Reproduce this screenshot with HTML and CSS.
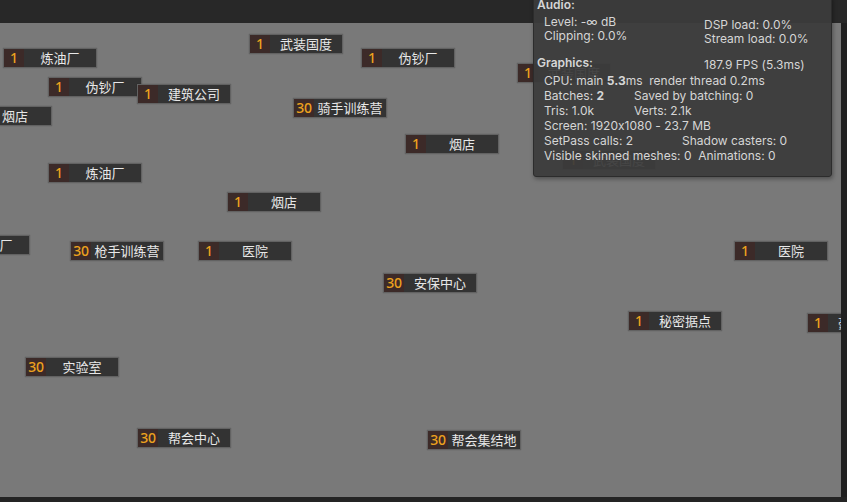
FILE: index.html
```html
<!DOCTYPE html>
<html lang="zh">
<head>
<meta charset="utf-8">
<link rel="stylesheet" href="styles.css">
</head>
<body>
<div class="stage">
  <div class="topbar"></div>
  <div class="middle">
    <div class="canvas">
      <div class="tag" style="left:3px;top:25px"><span class="num">1</span><span class="name">炼油厂</span></div>
      <div class="tag" style="left:249px;top:11px"><span class="num">1</span><span class="name">武装国度</span></div>
      <div class="tag" style="left:361px;top:25px"><span class="num">1</span><span class="name">伪钞厂</span></div>
      <div class="tag" style="left:517px;top:40px"><span class="num">1</span><span class="name">武装国度</span></div>
      <div class="tag" style="left:562px;top:127px"><span class="num">1</span><span class="name">武装国度</span></div>
      <div class="tag" style="left:48px;top:54px"><span class="num">1</span><span class="name">伪钞厂</span></div>
      <div class="tag" style="left:137px;top:61px"><span class="num">1</span><span class="name">建筑公司</span></div>
      <div class="tag" style="left:-42px;top:83px"><span class="num">1</span><span class="name">烟店</span></div>
      <div class="tag" style="left:293px;top:75px"><span class="num">30</span><span class="name">骑手训练营</span></div>
      <div class="tag" style="left:405px;top:111px"><span class="num">1</span><span class="name">烟店</span></div>
      <div class="tag" style="left:48px;top:140px"><span class="num">1</span><span class="name">炼油厂</span></div>
      <div class="tag" style="left:227px;top:169px"><span class="num">1</span><span class="name">烟店</span></div>
      <div class="tag" style="left:-64px;top:212px"><span class="num">1</span><span class="name">炼油厂</span></div>
      <div class="tag" style="left:70px;top:218px"><span class="num">30</span><span class="name">枪手训练营</span></div>
      <div class="tag" style="left:198px;top:218px"><span class="num">1</span><span class="name">医院</span></div>
      <div class="tag" style="left:734px;top:218px"><span class="num">1</span><span class="name">医院</span></div>
      <div class="tag" style="left:383px;top:250px"><span class="num">30</span><span class="name">安保中心</span></div>
      <div class="tag" style="left:628px;top:288px"><span class="num">1</span><span class="name">秘密据点</span></div>
      <div class="tag" style="left:807px;top:290px"><span class="num">1</span><span class="name">豪华别墅</span></div>
      <div class="tag" style="left:25px;top:334px"><span class="num">30</span><span class="name">实验室</span></div>
      <div class="tag" style="left:137px;top:405px"><span class="num">30</span><span class="name">帮会中心</span></div>
      <div class="tag" style="left:427px;top:407px"><span class="num">30</span><span class="name">帮会集结地</span></div>
    </div>
    <div class="strip"></div>
  </div>
  <div class="bottombar"></div>

  <div class="stats">
    <div class="head">Audio:</div>
    <div class="audio">
      <div class="col-left">
        <div>Level: -∞ dB</div>
        <div>Clipping: 0.0%</div>
      </div>
      <div class="col-right">
        <div>DSP load: 0.0%</div>
        <div>Stream load: 0.0%</div>
      </div>
    </div>
    <div class="gfx-head">
      <span class="head gfx-title">Graphics:</span>
      <span class="fps">187.9 FPS (5.3ms)</span>
    </div>
    <div class="lines">
      <div class="line">CPU: main <b>5.3</b>ms&nbsp; render thread 0.2ms</div>
      <div class="line"><span class="c90">Batches: <b>2</b></span><span>Saved by batching: 0</span></div>
      <div class="line"><span class="c90">Tris: 1.0k</span><span>Verts: 2.1k</span></div>
      <div class="line">Screen: 1920x1080 - 23.7 MB</div>
      <div class="line"><span class="c138">SetPass calls: 2</span><span>Shadow casters: 0</span></div>
      <div class="line">Visible skinned meshes: 0&nbsp; Animations: 0</div>
    </div>
  </div>
</div>
</body>
</html>
```
FILE: styles.css
```css
html, body {
  margin: 0;
  padding: 0;
  background: #232323;
  overflow: hidden;
}
.stage {
  position: relative;
  width: 847px;
  height: 502px;
  display: flex;
  flex-direction: column;
}
.topbar {
  height: 23px;
  background: #282828;
  flex: none;
}
.middle {
  height: 474px;
  display: flex;
  flex: none;
}
.canvas {
  position: relative;
  flex: 1;
  background: #797979;
  overflow: hidden;
}
.strip {
  width: 6px;
  background: #202020;
}
.bottombar {
  flex: 1;
  background: #242424;
}
.tag {
  position: absolute;
  display: flex;
  width: 94px;
  height: 20px;
  box-sizing: border-box;
  border: 1px solid #626262;
  background: #333333;
  box-shadow: 0 0 1px rgba(0,0,0,0.25);
}
.num {
  width: 20px;
  flex: none;
  background: #3c2a28;
  color: #eca11e;
  font: 500 14px/18px "Noto Sans", "Roboto", sans-serif;
  text-align: center;
  letter-spacing: -0.2px;
}
.name {
  flex: 1;
  text-align: center;
  color: #e8e8e8;
  font: 13px/18px "Noto Sans CJK SC", "Noto Sans", sans-serif;
  white-space: nowrap;
  overflow: hidden;
}
.stats {
  position: absolute;
  left: 533px;
  top: -4px;
  width: 299px;
  height: 181px;
  box-sizing: border-box;
  background: rgba(60, 60, 60, 0.94);
  border: 1px solid #2c2c2c;
  border-radius: 3px;
  box-shadow: 1px 2px 4px rgba(0,0,0,0.35);
  color: #d6d6d6;
  font: 12px/15px "Inter", "Noto Sans", sans-serif;
  font-feature-settings: "calt" 0;
  padding-left: 3px;
}
.head {
  font-weight: 600;
  height: 15px;
}
.audio {
  display: flex;
  margin-top: 2.5px;
  padding-left: 7px;
}
.col-left {
  width: 160px;
  line-height: 14.5px;
}
.col-right {
  padding-top: 3px;
  line-height: 14px;
}
.gfx-head {
  display: flex;
  height: 15px;
  margin-top: 9px;
  align-items: flex-start;
}
.gfx-title {
  width: 167px;
}
.fps {
  padding-top: 2.6px;
}
.lines {
  margin-top: 3.3px;
  padding-left: 7px;
}
.line {
  height: 15px;
  white-space: nowrap;
}
.line b {
  font-weight: 700;
}
.c90 {
  display: inline-block;
  width: 90px;
}
.c138 {
  display: inline-block;
  width: 138px;
}
```
